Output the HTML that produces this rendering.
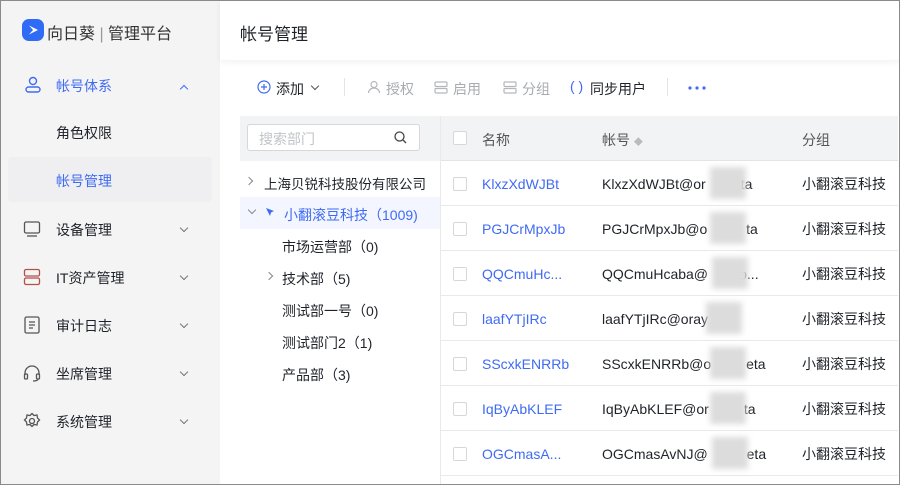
<!DOCTYPE html>
<html><head><meta charset="utf-8"><style>
*{margin:0;padding:0;box-sizing:border-box}
body{width:900px;height:485px;overflow:hidden;font-family:"Liberation Sans","Noto Sans CJK SC",sans-serif;font-size:14px;color:#1f2329;background:#fff;position:relative}
.frame{position:absolute;inset:0;border:1px solid #8a8a8a;pointer-events:none;z-index:9}
.side{position:absolute;left:0;top:0;width:220px;height:485px;background:#f4f4f5}
.a{position:absolute}
.blue{color:#3f6bf2}
.gray{color:#a8abb2}
svg{position:absolute}
.chev{position:absolute;left:181px;width:6px;height:6px;border-right:1.2px solid #777;border-bottom:1.2px solid #777;transform:rotate(45deg)}
.row{position:absolute;left:440px;width:458px;height:45px;border-bottom:1px solid #e8e9eb}
.row span.a{top:14px;line-height:18px}
.cb{position:absolute;left:13px;top:16px;width:14px;height:14px;border:1px solid #d5d7db;border-radius:2px;background:#fff}
.blur{position:absolute;top:6px;width:36px;height:32px;background:#dcdcdc;filter:blur(3px)}
</style></head><body>
<div class="side">
 <svg style="left:22px;top:19px" width="22" height="22" viewBox="0 0 22 22"><rect width="22" height="22" rx="7" fill="#2f6bf5"/><path d="M7 6.5l9 4.5-9 4.5z" fill="#fff"/><path d="M7 6.5l4 4.5-4 4.5z" fill="#2f6bf5"/></svg>
 <div class="a" style="left:47px;top:20px;font-size:16px;color:#333">向日葵 <span style="color:#999">|</span> 管理平台</div>
 <svg style="left:24px;top:76px" width="18" height="18" viewBox="0 0 18 18" fill="none" stroke="#3f6bf2" stroke-width="1.4"><circle cx="9" cy="5" r="3.5"/><rect x="2" y="11" width="14" height="5" rx="2.5"/></svg>
 <div class="a blue" style="left:56px;top:76px">帐号体系</div>
 <div class="chev" style="top:86px;border-color:#3f6bf2;transform:rotate(225deg)"></div>
 <div class="a" style="left:56px;top:123px">角色权限</div>
 <div class="a" style="left:8px;top:157px;width:204px;height:45px;background:#efeff1;border-radius:4px"></div>
 <div class="a blue" style="left:56px;top:171px">帐号管理</div>
 <svg style="left:23px;top:220px" width="18" height="18" viewBox="0 0 18 18" fill="none" stroke="#555" stroke-width="1.3"><rect x="1.5" y="2" width="15" height="11" rx="1.5"/><path d="M4 16h10"/></svg>
 <div class="a" style="left:56px;top:220px">设备管理</div><div class="chev" style="top:225px"></div>
 <svg style="left:23px;top:268px" width="18" height="18" viewBox="0 0 18 18" fill="none" stroke="#b0524a" stroke-width="1.3"><rect x="1.5" y="1.5" width="15" height="6.5" rx="1.5"/><rect x="1.5" y="10" width="15" height="6.5" rx="1.5"/></svg>
 <div class="a" style="left:56px;top:268px">IT资产管理</div><div class="chev" style="top:273px"></div>
 <svg style="left:24px;top:316px" width="16" height="18" viewBox="0 0 16 18" fill="none" stroke="#555" stroke-width="1.3"><rect x="1" y="1" width="14" height="16" rx="1.5"/><path d="M5 6h6M5 9h6M5 12h4"/></svg>
 <div class="a" style="left:56px;top:316px">审计日志</div><div class="chev" style="top:321px"></div>
 <svg style="left:23px;top:364px" width="18" height="18" viewBox="0 0 18 18" fill="none" stroke="#555" stroke-width="1.3"><path d="M2 11V9a7 7 0 0114 0v2"/><rect x="1.5" y="10" width="3" height="5" rx="1"/><rect x="13.5" y="10" width="3" height="5" rx="1"/><path d="M15 15q0 2-5 2"/></svg>
 <div class="a" style="left:56px;top:364px">坐席管理</div><div class="chev" style="top:369px"></div>
 <svg style="left:23px;top:412px" width="18" height="18" viewBox="0 0 18 18" fill="none" stroke="#555" stroke-width="1.3"><circle cx="9" cy="9" r="2.5"/><path d="M9 1.5l2 2 3-.5.5 3 2 2-2 2-.5 3-3-.5-2 2-2-2-3 .5-.5-3-2-2 2-2 .5-3 3 .5z"/></svg>
 <div class="a" style="left:56px;top:412px">系统管理</div><div class="chev" style="top:417px"></div>
</div>
<div class="a" style="left:220px;top:0;width:680px;height:60px;background:#fff;box-shadow:0 2px 6px rgba(0,0,0,.06)"></div>
<div class="a" style="left:240px;top:20px;font-size:17px;color:#1f2329">帐号管理</div>
<svg style="left:257px;top:80px" width="14" height="14" viewBox="0 0 14 14" fill="none" stroke="#3f6bf2" stroke-width="1.2"><circle cx="7" cy="7" r="6"/><path d="M7 4v6M4 7h6"/></svg>
<div class="a" style="left:276px;top:79px">添加</div>
<div class="chev" style="left:312px;top:83px;border-color:#555"></div>
<div class="a" style="left:344px;top:78px;width:1px;height:18px;background:#e3e4e6"></div>
<svg style="left:367px;top:80px" width="14" height="14" viewBox="0 0 14 14" fill="none" stroke="#b4b6bb" stroke-width="1.2"><circle cx="7" cy="4.5" r="3"/><path d="M1.5 13a5.5 5 0 0111 0"/></svg>
<div class="a gray" style="left:386px;top:79px">授权</div>
<svg style="left:434px;top:81px" width="14" height="13" viewBox="0 0 14 13" fill="none" stroke="#b4b6bb" stroke-width="1.2"><rect x="1" y="1" width="12" height="4.5" rx="1"/><rect x="1" y="7.5" width="12" height="4.5" rx="1"/></svg>
<div class="a gray" style="left:453px;top:79px">启用</div>
<svg style="left:503px;top:81px" width="14" height="13" viewBox="0 0 14 13" fill="none" stroke="#b4b6bb" stroke-width="1.2"><rect x="1" y="1" width="12" height="4.5" rx="1"/><rect x="1" y="7.5" width="12" height="4.5" rx="1"/></svg>
<div class="a gray" style="left:522px;top:79px">分组</div>
<div class="a blue" style="left:570px;top:78px;font-size:14px">( )</div>
<div class="a" style="left:590px;top:79px">同步用户</div>
<div class="a" style="left:667px;top:78px;width:1px;height:18px;background:#e3e4e6"></div>
<svg style="left:688px;top:86px" width="18" height="4" viewBox="0 0 18 4" fill="#3f6bf2"><circle cx="2" cy="2" r="1.6"/><circle cx="9" cy="2" r="1.6"/><circle cx="16" cy="2" r="1.6"/></svg>
<div class="a" style="left:240px;top:116px;width:200px;height:45px;background:#f2f3f5"></div>
<div class="a" style="left:247px;top:124px;width:173px;height:27px;border:1px solid #d5d7db;border-radius:3px;background:#fff"></div>
<div class="a" style="left:259px;top:129px;color:#c0c3c8">搜索部门</div>
<svg style="left:394px;top:131px" width="13" height="13" viewBox="0 0 13 13" fill="none" stroke="#444" stroke-width="1.3"><circle cx="5.5" cy="5.5" r="4.5"/><path d="M9 9l3 3"/></svg>
<div class="a" style="left:440px;top:116px;width:1px;height:369px;background:#e8e9eb"></div>
<div class="chev" style="left:246px;top:178px;width:6px;height:6px;transform:rotate(-45deg);border-color:#888"></div>
<div class="a" style="left:264px;top:173px;font-size:13.5px">上海贝锐科技股份有限公司</div>
<div class="a" style="left:240px;top:197px;width:200px;height:32px;background:#f3f6fe"></div>
<div class="chev" style="left:249px;top:207px;width:6px;height:6px;border-color:#888"></div>
<svg style="left:265px;top:207px" width="10" height="10" viewBox="0 0 10 10"><path d="M1 1l8 3-3 1.5-1 3.5z" fill="#3f6bf2"/></svg>
<div class="a blue" style="left:284px;top:205px">小翻滚豆科技（1009)</div>
<div class="a" style="left:282px;top:237px">市场运营部（0)</div>
<div class="chev" style="left:266px;top:273px;width:6px;height:6px;transform:rotate(-45deg);border-color:#888"></div>
<div class="a" style="left:282px;top:269px">技术部（5)</div>
<div class="a" style="left:282px;top:301px">测试部一号（0)</div>
<div class="a" style="left:282px;top:333px">测试部门2（1)</div>
<div class="a" style="left:282px;top:365px">产品部（3)</div>
<div class="a" style="left:441px;top:116px;width:457px;height:45px;background:#f2f3f5;border-bottom:1px solid #e3e4e6"></div>
<div class="cb" style="left:453px;top:131px"></div>
<div class="a" style="left:482px;top:130px;color:#555">名称</div>
<div class="a" style="left:602px;top:130px;color:#555">帐号 <span style="color:#bbb;font-size:9px">◆</span></div>
<div class="a" style="left:802px;top:130px;color:#555">分组</div>
<div class="row" style="top:161px"><div class="cb"></div><span class="a blue" style="left:42px">KlxzXdWJBt</span><span class="a" style="left:162px">KlxzXdWJBt@or&nbsp;&nbsp;&nbsp;&nbsp;&nbsp;&nbsp;&nbsp;&nbsp;&nbsp;ta</span><div class="blur" style="left:270px"></div><span class="a" style="left:362px">小翻滚豆科技</span></div>
<div class="row" style="top:206px"><div class="cb"></div><span class="a blue" style="left:42px">PGJCrMpxJb</span><span class="a" style="left:162px">PGJCrMpxJb@o&nbsp;&nbsp;&nbsp;&nbsp;&nbsp;&nbsp;&nbsp;&nbsp;&nbsp;&nbsp;ta</span><div class="blur" style="left:270px"></div><span class="a" style="left:362px">小翻滚豆科技</span></div>
<div class="row" style="top:251px"><div class="cb"></div><span class="a blue" style="left:42px">QQCmuHc...</span><span class="a" style="left:162px">QQCmuHcaba@&nbsp;&nbsp;&nbsp;&nbsp;&nbsp;&nbsp;&nbsp;&nbsp;o...</span><div class="blur" style="left:272px"></div><span class="a" style="left:362px">小翻滚豆科技</span></div>
<div class="row" style="top:296px"><div class="cb"></div><span class="a blue" style="left:42px">laafYTjIRc</span><span class="a" style="left:162px">laafYTjIRc@oray</span><div class="blur" style="left:266px"></div><span class="a" style="left:362px">小翻滚豆科技</span></div>
<div class="row" style="top:341px"><div class="cb"></div><span class="a blue" style="left:42px">SScxkENRRb</span><span class="a" style="left:162px">SScxkENRRb@o&nbsp;&nbsp;&nbsp;&nbsp;&nbsp;&nbsp;&nbsp;&nbsp;&nbsp;eta</span><div class="blur" style="left:270px"></div><span class="a" style="left:362px">小翻滚豆科技</span></div>
<div class="row" style="top:386px"><div class="cb"></div><span class="a blue" style="left:42px">IqByAbKLEF</span><span class="a" style="left:162px">IqByAbKLEF@or&nbsp;&nbsp;&nbsp;&nbsp;&nbsp;&nbsp;&nbsp;&nbsp;&nbsp;ta</span><div class="blur" style="left:270px"></div><span class="a" style="left:362px">小翻滚豆科技</span></div>
<div class="row" style="top:431px"><div class="cb"></div><span class="a blue" style="left:42px">OGCmasA...</span><span class="a" style="left:162px">OGCmasAvNJ@&nbsp;&nbsp;&nbsp;&nbsp;&nbsp;&nbsp;&nbsp;&nbsp;&nbsp;&nbsp;eta</span><div class="blur" style="left:272px"></div><span class="a" style="left:362px">小翻滚豆科技</span></div>
<div class="frame"></div>
</body></html>
